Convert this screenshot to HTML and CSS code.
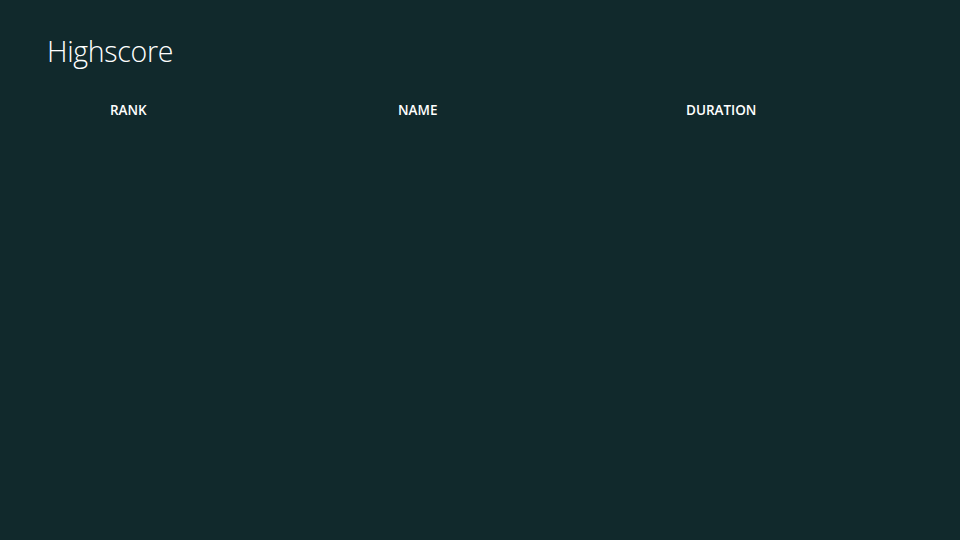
FILE: index.html
```html
<!DOCTYPE html>
<html>
<head>
<meta charset="utf-8">
<link rel="stylesheet" href="styles.css">
</head>
<body>
<div class="page">
  <h1 class="title">Highscore</h1>
  <div class="table-head">
    <div class="col">RANK</div>
    <div class="col">NAME</div>
    <div class="col">DURATION</div>
  </div>
</div>
</body>
</html>
```
FILE: styles.css
```css
html, body {
  margin: 0;
  padding: 0;
  width: 960px;
  height: 540px;
  background: #11292c;
  overflow: hidden;
}
.page {
  padding: 31px 0 0 47px;
  font-family: "Open Sans", "Noto Sans", sans-serif;
  color: #ffffff;
}
.title {
  margin: 0;
  font-weight: 300;
  font-size: 28.5px;
  line-height: 40px;
  letter-spacing: -0.3px;
}
.table-head {
  display: grid;
  grid-template-columns: 288px 288px 288px;
  padding: 30px 0 0 63px;
}
.col {
  font-size: 13.5px;
  font-weight: 600;
  line-height: 18px;
}
```
